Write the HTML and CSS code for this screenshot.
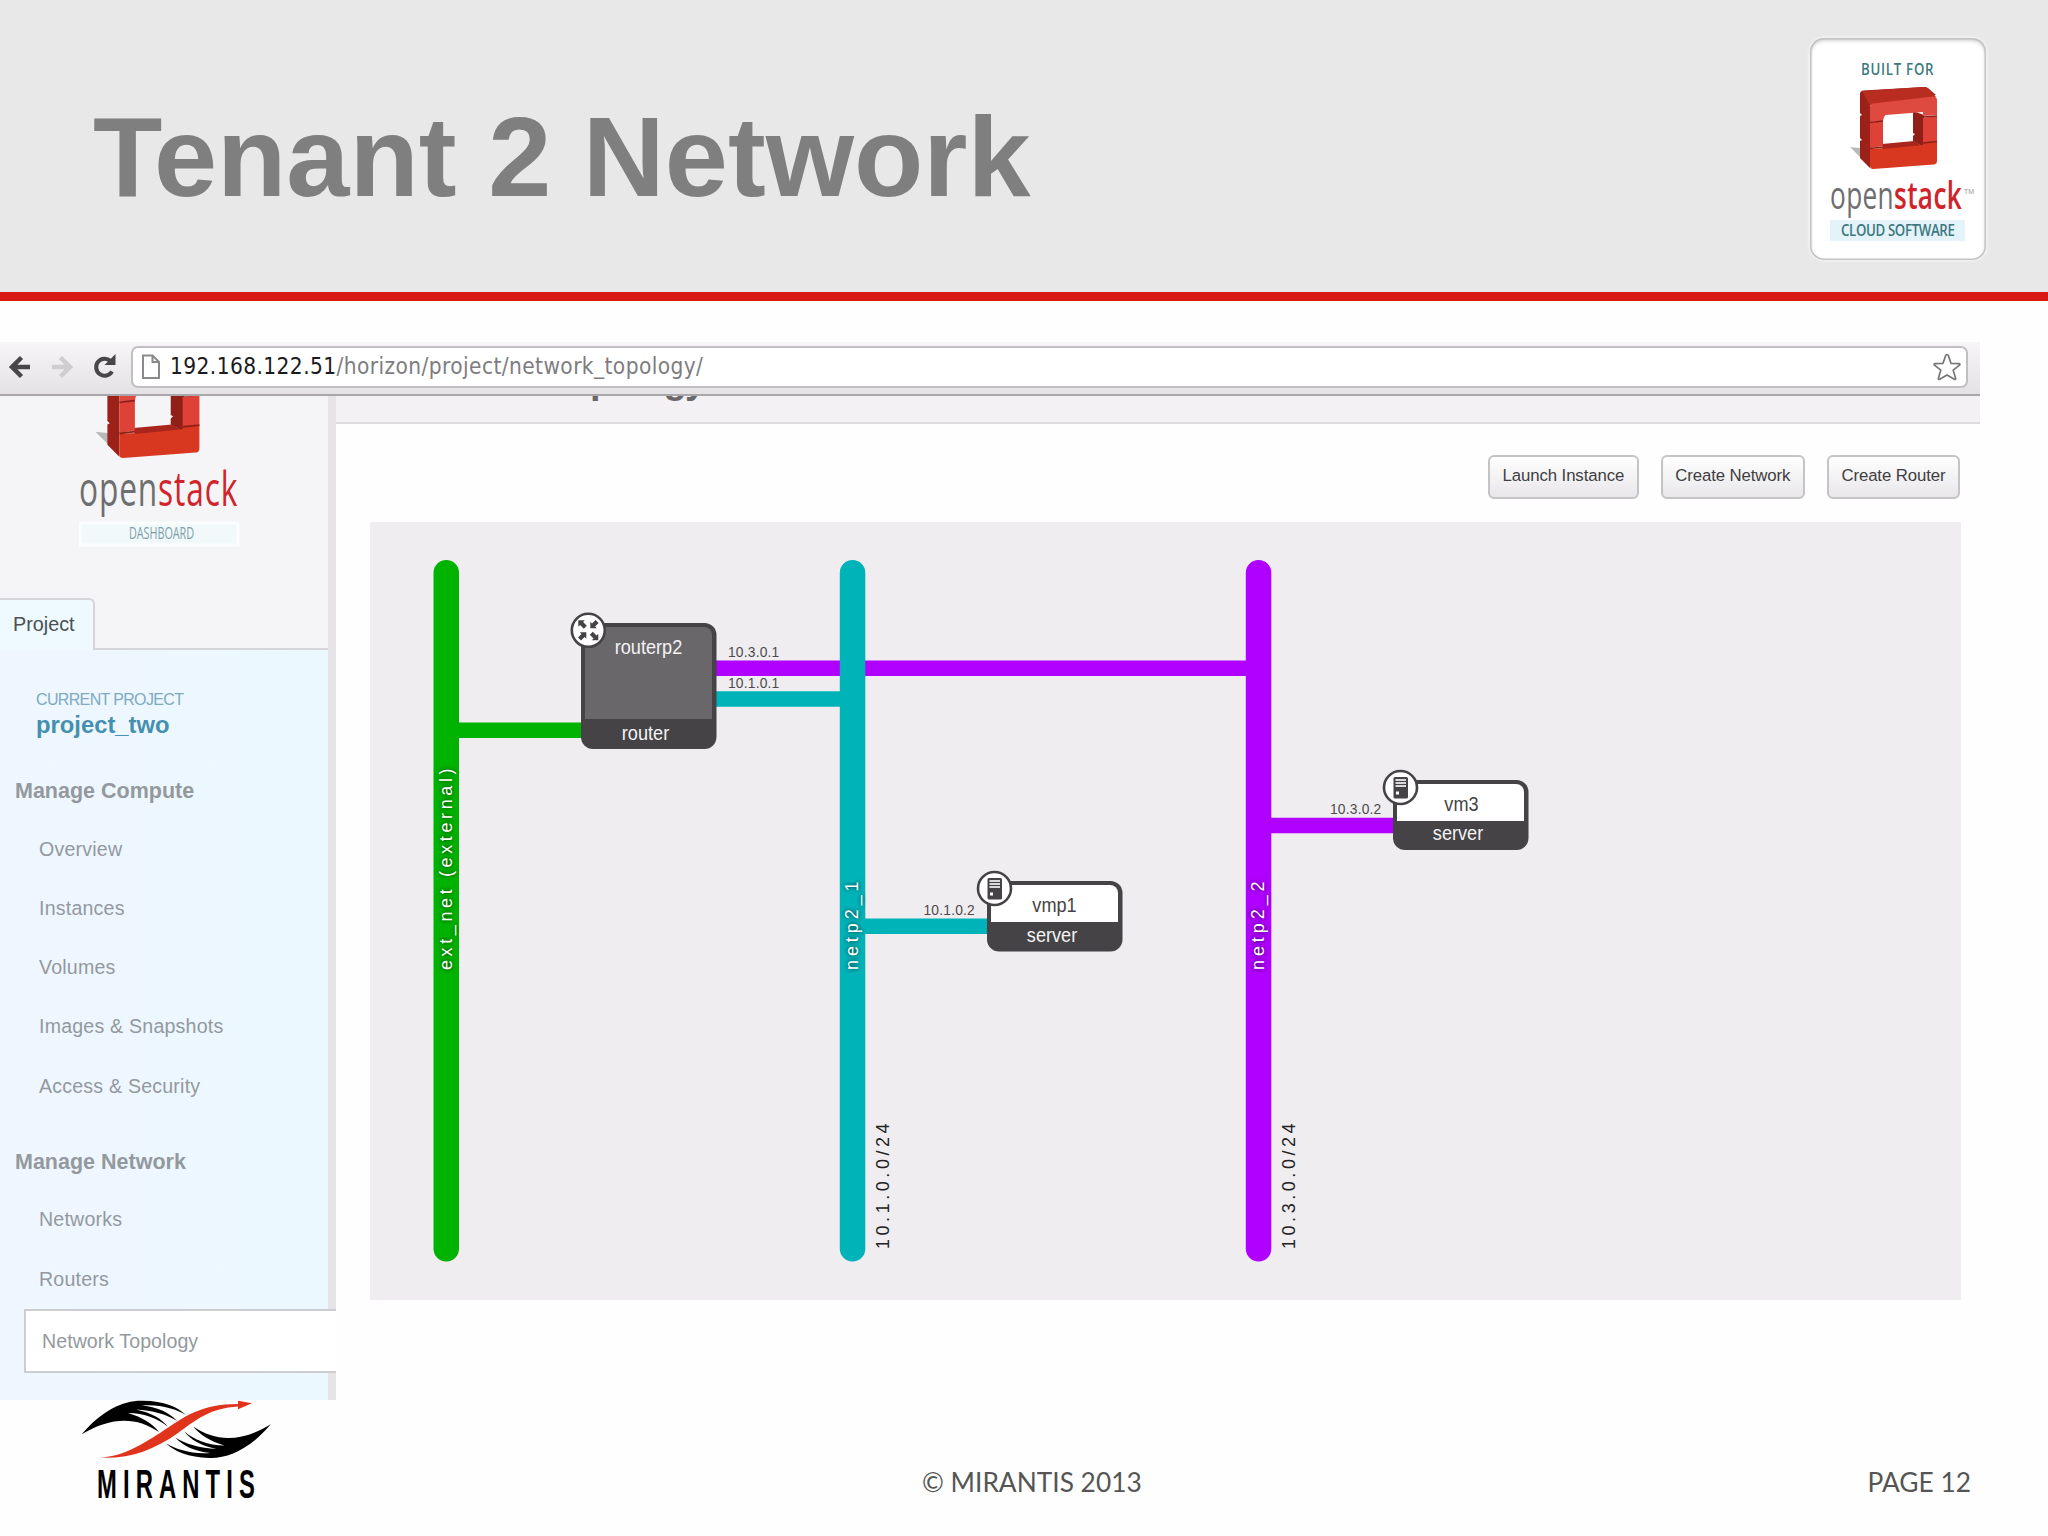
FILE: index.html
```html
<!DOCTYPE html>
<html lang="en">
<head>
<meta charset="UTF-8">
<meta name="viewport" content="width=device-width, initial-scale=1.0">
<title>Tenant 2 Network</title>
<link rel="stylesheet" href="styles.css">
</head>
<body>

<header class="slide-header">
    <h1>Tenant 2 Network</h1>
    <div class="badge">
        <svg width="176" height="222" viewBox="0 0 176 222" role="img" aria-label="Built for OpenStack">
            <text class="badge-caps" transform="translate(51 37) scale(.78 1)" textLength="93">BUILT FOR</text>
            <use href="#cube" x="50" y="49" width="78" height="82"/>
            <text class="wordmark" transform="translate(20 171) scale(.69 1)" textLength="191"><tspan>open</tspan><tspan class="stack">stack</tspan></text>
            <text class="tm" x="154" y="156">TM</text>
            <rect x="20" y="182" width="135" height="21" fill="#e3f3f9"/>
            <text class="badge-caps" transform="translate(31 198) scale(.78 1)" textLength="146">CLOUD SOFTWARE</text>
        </svg>
    </div>
</header>

<main class="browser">
    <div class="toolbar">
        <svg class="nav-icons" width="124" height="50" viewBox="0 0 124 50">
            <path d="M30 25H13M21.500 15.500L12 25l9.500 9.500" fill="none" stroke="#474648" stroke-width="4.500"/>
            <path d="M52 25h17M60.500 15.500L70 25l-9.500 9.500" fill="none" stroke="#cfcdd0" stroke-width="4.500"/>
            <path d="M112 29.500a8.500 8.500 0 1 1-1.500-10.500" fill="none" stroke="#474648" stroke-width="4"/>
            <path d="M115.500 12v11h-11z" fill="#474648"/>
        </svg>
        <div class="omnibox">
            <svg width="20" height="26" viewBox="0 0 20 26">
                <path d="M2 1.500h9.500L18 8v16H2zM11.500 1.500V8H18" fill="#fff" stroke="#8b898c" stroke-width="2"/>
            </svg>
            <span class="url"><b>192.168.122.51</b>/horizon/project/network_topology/</span>
            <svg class="star" width="28" height="28" viewBox="0 0 28 28">
                <path d="M14 1.500q1 0 1.400 1.200l2.600 7.600 8 .3q1.600.3.500 1.600l-6.300 5 2.400 8q.2 1.700-1.300 1L14 22l-7.300 4.200q-1.500.7-1.300-1l2.400-8-6.300-5q-1.100-1.300.5-1.600l8-.3 2.600-7.600Q13 1.500 14 1.500z" fill="#fff" stroke="#777578" stroke-width="1.700" stroke-linejoin="round"/>
            </svg>
        </div>
    </div>

    <div class="page">
        <aside class="sidebar">
            <div class="brand">
                <svg width="170" height="160" viewBox="0 0 170 160" role="img" aria-label="OpenStack Dashboard">
                    <use href="#cube" x="28" y="-36" width="94" height="98"/>
                    <text class="wordmark brand-word" transform="translate(0 110) scale(.66 1)" textLength="240"><tspan>open</tspan><tspan class="stack">stack</tspan></text>
                    <rect x="1" y="127" width="158" height="22" fill="#f2f9fb" stroke="#fbfdfe" stroke-width="3"/>
                    <text class="dash" transform="translate(50 143) scale(.7 1)" textLength="93">DASHBOARD</text>
                </svg>
            </div>
            <div class="tabs"><span class="tab">Project</span></div>
            <nav class="panel">
                <div class="current">
                    <h4>CURRENT PROJECT</h4>
                    <h3>project_two</h3>
                </div>
                <h5>Manage Compute</h5>
                <ul>
                    <li>Overview</li>
                    <li>Instances</li>
                    <li>Volumes</li>
                    <li>Images &amp; Snapshots</li>
                    <li>Access &amp; Security</li>
                </ul>
                <h5>Manage Network</h5>
                <ul>
                    <li>Networks</li>
                    <li>Routers</li>
                    <li class="active">Network Topology</li>
                </ul>
            </nav>
        </aside>

        <section class="content">
            <div class="page-title"><h2>Network Topology</h2></div>
            <div class="actions">
                <button>Launch Instance</button>
                <button>Create Network</button>
                <button>Create Router</button>
            </div>
            <svg class="topology" width="1591" height="778" viewBox="370 522 1591 778">
                <!-- links -->
                <path d="M716 668.200h540" stroke="#b000ff" stroke-width="15.500"/>
                <path d="M716 699h130M860 926.300h130" stroke="#00b3b8" stroke-width="15.500"/>
                <path d="M450 730.200h135" stroke="#00b300" stroke-width="15.500"/>
                <path d="M1260 825.500h135" stroke="#b000ff" stroke-width="15.500"/>

                <!-- networks -->
                <rect x="433.500" y="560" width="25.500" height="701.500" rx="12.700" fill="#00b300"/>
                <rect x="839.800" y="560" width="25.500" height="701.500" rx="12.700" fill="#00b3b8"/>
                <rect x="1245.800" y="560" width="25.500" height="701.500" rx="12.700" fill="#b000ff"/>
                <g class="net-name">
                    <text transform="translate(451.500 970) rotate(-90)" textLength="205">ext_net (external)</text>
                    <text transform="translate(857.500 970) rotate(-90)" textLength="92">netp2_1</text>
                    <text transform="translate(1263.500 970) rotate(-90)" textLength="92">netp2_2</text>
                </g>
                <g class="subnet">
                    <text transform="translate(889 1249) rotate(-90)" textLength="129">10.1.0.0/24</text>
                    <text transform="translate(1295 1249) rotate(-90)" textLength="129">10.3.0.0/24</text>
                </g>
                <g class="ip">
                    <text x="728" y="657">10.3.0.1</text>
                    <text x="728" y="688">10.1.0.1</text>
                    <text x="923.500" y="915">10.1.0.2</text>
                    <text x="1330" y="814">10.3.0.2</text>
                </g>

                <!-- router -->
                <g class="node">
                    <rect x="581" y="623" width="135.500" height="126" rx="12" fill="#454346"/>
                    <path d="M585 719V635a8 8 0 0 1 8-8h111a8 8 0 0 1 8 8v84z" fill="#69676a"/>
                    <text transform="translate(648.500 653.500) scale(.94 1)">routerp2</text>
                    <text transform="translate(645.500 739.500) scale(.94 1)">router</text>
                    <circle cx="588.300" cy="630.300" r="16.500"/>
                    <g transform="translate(588.300 630.300)" fill="#454346">
                        <path d="M-10-10h6.500l-1.700 1.800 3.700 3.700-3 3-3.700-3.700-1.800 1.700z"/>
                        <path d="M10 10H3.500l1.700-1.800-3.700-3.700 3-3 3.700 3.700L10 3.500z"/>
                        <path d="M2-2v-6.500l1.700 1.700L7.300-10.300l3 3L6.800-3.700 8.500-2z"/>
                        <path d="M-2 2v6.500l-1.700-1.700-3.600 3.500-3-3 3.500-3.600L-8.500 2z"/>
                    </g>
                </g>

                <!-- servers -->
                <g class="node">
                    <rect x="987" y="881" width="135.500" height="70.500" rx="12" fill="#454346"/>
                    <path d="M991 922V893a8 8 0 0 1 8-8h111a8 8 0 0 1 8 8v29z" fill="#fff"/>
                    <text class="dark" transform="translate(1054.500 912) scale(.94 1)">vmp1</text>
                    <text transform="translate(1052 941.500) scale(.94 1)">server</text>
                    <use href="#server" x="976" y="870"/>
                </g>
                <g class="node">
                    <rect x="1393" y="780" width="135.500" height="70" rx="12" fill="#454346"/>
                    <path d="M1397 821V792a8 8 0 0 1 8-8h111a8 8 0 0 1 8 8v29z" fill="#fff"/>
                    <text class="dark" transform="translate(1461.500 810.500) scale(.94 1)">vm3</text>
                    <text transform="translate(1458 840) scale(.94 1)">server</text>
                    <use href="#server" x="1382" y="769"/>
                </g>
            </svg>
        </section>
    </div>
</main>

<footer class="slide-footer">
    <svg width="200" height="110" viewBox="0 0 200 110" role="img" aria-label="Mirantis">
        <path id="wing" d="M1.700 34.300C22 10 44 0 63 .7 84 1 98 7 106 15 96 9 80 4 62 5.500 78 7 90 13 97 21 88 15 72 10 56 9.500 72 13 82 19 88 27 79 19 64 13 48 13 62 17 73 24 79 32 56 16 30 17 1.700 34.300z"/>
        <use href="#wing" transform="rotate(180 96.200 29.300)"/>
        <path d="M20 57.700C45 56 62 44 80 33 104 17 120 4 158 4V.7l14 2.600-14 6V6.500C130 8 116 20 98 33 74 50 50 59 20 57.700z" fill="#e0341c"/>
        <text class="mirantis" transform="translate(17 98) scale(.58 1)" textLength="272">MIRANTIS</text>
    </svg>
    <span class="copyright">© MIRANTIS 2013</span>
    <span class="page-no">PAGE 12</span>
</footer>

<!-- shared symbols -->
<svg class="defs" width="0" height="0">
    <symbol id="cube" viewBox="0 0 78 82" overflow="visible">
        <path d="M-10 60l10 1 10 19z" fill="#b9b9b9"/>
        <path d="M0 7q0-3 3-3.500L64 0q3 0 5 2l7 6-66 10v63L0 71V54l2-1-2-2V29l2-1-2-2z" fill="#9c2219"/>
        <path d="M2 4L64 0q3 0 5 2l7 8-66 8z" fill="#b92c20"/>
        <path d="M53 24l11 4v32l-11-6v-5l2-2-2-1z" fill="#8f1f17"/>
        <path d="M22 57l32-3 10 6-41 3z" fill="#a8261b"/>
        <path d="M10 20q0-3 3-3.500L73 9.500q4 0 4 3.500v15l-14 1v-4L26 28q-2 0-3 6l-13 1z" fill="#df4a40"/>
        <path d="M10 36l13-2v25l-13 2zM63 31l14-2v25l-14 2z" fill="#de4136"/>
        <path d="M10 62l13-1v1l40-4v-3l14-1v20q0 3-3 3.500L13 82q-3 0-3-3z" fill="#d8381f"/>
        <path d="M10 35.500l13-1.500M10 61.500l13-1.500M63 30l14-1M63 56l14-1.500" stroke="#8f1f17" stroke-width="1.500"/>
    </symbol>
    <symbol id="server" viewBox="0 0 37 37" width="37" height="37">
        <circle cx="18.500" cy="18.500" r="16.500" fill="#fff" stroke="#454346" stroke-width="2.600"/>
        <rect x="11.500" y="8" width="14.500" height="21.500" rx="1.500" fill="#454346"/>
        <path d="M13.500 11h10.500M13.500 14h10.500M13.500 17h10.500" stroke="#d9d8da" stroke-width="1.800"/>
        <rect x="14" y="22.500" width="3" height="3" fill="#fff"/>
    </symbol>
</svg>

</body>
</html>
```
FILE: styles.css
```css
* {
    box-sizing: border-box;
}
body {
    margin: 0;
    width: 2048px;
    height: 1536px;
    overflow: hidden;
    background: #fefefe;
    font-family: "Liberation Sans", Arial, sans-serif;
    display: flex;
    flex-direction: column;
}
h1, h2, h3, h4, h5, ul {
    margin: 0;
    padding: 0;
}
svg {
    display: block;
    flex: none;
}
.defs {
    position: absolute;
}

/* slide header */
.slide-header {
    height: 301px;
    flex: none;
    background: #e8e8e8;
    border-bottom: 9px solid #d91a14;
    display: flex;
    justify-content: space-between;
    padding: 38px 62px 0 93px;
}
.slide-header h1 {
    font-size: 113.500px;
    line-height: 132px;
    padding-top: 53px;
    color: #7f7f7f;
}
.badge {
    width: 176px;
    height: 222px;
    border-radius: 14px;
    background: #fff;
    box-shadow: inset 0 0 0 1.5px #c3c3c3, inset 0 2px 4px #bbb, 0 0 3px 1px #f6f6f6;
}
.badge-caps {
    font: 600 17px "Open Sans", sans-serif;
    fill: #3c7880;
}
.wordmark {
    font-family: "Open Sans", sans-serif;
    font-size: 38px;
    font-weight: 500;
    fill: #6d6e70;
}
.wordmark .stack {
    font-weight: 600;
    fill: #d0242b;
}
.brand-word {
    font-size: 48px;
    font-weight: 400;
}
.brand-word .stack {
    font-weight: 500;
}
.tm {
    font-size: 7px;
    fill: #999;
}
.dash {
    font: 15.500px "Open Sans", sans-serif;
    fill: #7b9fa8;
}

/* browser */
.browser {
    margin-top: 41px;
    width: 1980px;
    height: 1058px;
    flex: none;
}
.toolbar {
    height: 54px;
    display: flex;
    align-items: flex-start;
    background: linear-gradient(#f7f5f8, #e4e2e5);
    border-bottom: 2px solid #a9a7aa;
}
.omnibox {
    margin: 3.500px 12px 0 7px;
    flex: 1;
    height: 42px;
    border: 2px solid #c1bfc2;
    border-radius: 7px;
    background: #fff;
    display: flex;
    align-items: center;
    padding: 0 5px 0 8px;
}
.url {
    margin-left: 9px;
    flex: 1;
    font-family: "DejaVu Sans Condensed", "DejaVu Sans", sans-serif;
    font-stretch: condensed;
    font-size: 22.500px;
    letter-spacing: 0.400px;
    line-height: 30px;
    padding-bottom: 2px;
    color: #7e7c7f;
}
.url b {
    font-weight: normal;
    color: #1c1b1d;
}
.page {
    display: flex;
    height: 1004px;
}

/* sidebar */
.sidebar {
    width: 336px;
    flex: none;
    background: #f5f4f7;
    border-right: 8px solid #e6e4e7;
}
.brand {
    height: 202px;
    padding-left: 79px;
}
.tabs {
    height: 52px;
    display: flex;
}
.tabs::after {
    content: "";
    flex: 1;
    border-bottom: 2px solid #d5d6da;
}
.tab {
    width: 95px;
    padding-left: 13px;
    line-height: 49px;
    font-size: 19.800px;
    color: #4a5053;
    background: #eefaff;
    border-top: 2px solid #d5d6da;
    border-right: 2px solid #d5d6da;
    border-top-right-radius: 6px;
}
.panel {
    height: 750px;
    padding-top: 39px;
    background: linear-gradient(90deg, #eff6ff, #ebf8ff);
    color: #93999d;
}
.current {
    padding-left: 36px;
    height: 83px;
}
.current h4 {
    font-size: 16px;
    font-weight: normal;
    letter-spacing: -0.650px;
    line-height: 22px;
    color: #7daabf;
}
.current h3 {
    font-size: 23.800px;
    line-height: 28px;
    color: #4590ae;
}
.panel h5 {
    font-size: 21.500px;
    line-height: 38px;
    padding-left: 15px;
}
.panel ul {
    list-style: none;
    padding: 9.500px 0 27px;
}
.panel li {
    font-size: 19.600px;
    line-height: 59.300px;
    padding-left: 39px;
    letter-spacing: 0.200px;
}
.panel .active {
    position: relative;
    margin: 0 -8px 0 24px;
    height: 64px;
    line-height: 60px;
    padding-left: 16px;
    letter-spacing: 0.050px;
    background: #fff;
    border: 2.500px solid #cccdd0;
    border-right: 0;
}

/* content */
.content {
    flex: 1;
}
.page-title {
    height: 28px;
    overflow: hidden;
    background: #f3f1f4;
    border-bottom: 2px solid #dddbde;
}
.page-title h2 {
    font-size: 38px;
    line-height: 40px;
    letter-spacing: -1.700px;
    margin-top: -36px;
    padding-left: 67px;
    color: #69676a;
}
.actions {
    height: 98px;
    padding: 31px 20px 0 0;
    display: flex;
    justify-content: flex-end;
    gap: 22px;
}
.actions button {
    height: 44px;
    padding: 0 12.500px 3px;
    font: 16.800px "Liberation Sans", Arial, sans-serif;
    letter-spacing: -0.100px;
    color: #403e41;
    border: 2px solid #c5c3c6;
    border-radius: 6px;
    background: linear-gradient(#fff, #e8e6e9);
}
.topology {
    margin-left: 34px;
    background: #efedf0;
}
.net-name, .subnet {
    font-size: 18px;
    letter-spacing: 3.400px;
}
.net-name {
    fill: #fff;
    text-shadow: 0 0 4px rgba(0, 0, 0, 0.8);
}
.subnet {
    fill: #222;
}
.ip {
    font-size: 13.800px;
    letter-spacing: 0.200px;
    fill: #4c4a4d;
}
.node text {
    font-size: 19.300px;
    fill: #f4f3f5;
    text-anchor: middle;
}
.node .dark {
    fill: #454346;
}
.node circle {
    fill: #fff;
    stroke: #454346;
    stroke-width: 2.600px;
}

/* slide footer */
.slide-footer {
    flex: 1;
    display: grid;
    grid-template-columns: 842px 1fr auto;
    padding: 0 77px 0 80px;
    font-family: Lato, sans-serif;
    font-size: 26.300px;
    color: #555;
}
.slide-footer span {
    padding-top: 65px;
    line-height: 34px;
}
.mirantis {
    font: bold 41px "Liberation Sans", sans-serif;
}
```
